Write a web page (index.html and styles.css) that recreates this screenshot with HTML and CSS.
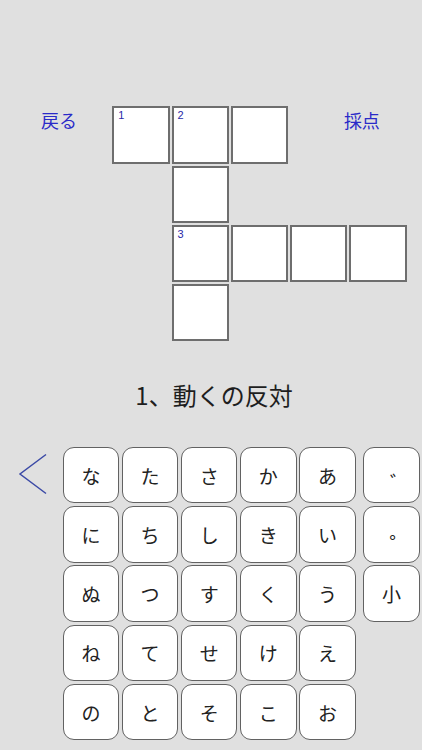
FILE: index.html
```html
<!DOCTYPE html>
<html lang="ja">
<head>
<meta charset="utf-8">
<title>クロスワード</title>
<link rel="stylesheet" href="styles.css">
</head>
<body>
<main class="screen">
  <section class="board">
    <div class="nav nav-back">戻る</div>
    <div class="cell c1 r1"><span class="num">1</span></div>
    <div class="cell c2 r1"><span class="num">2</span></div>
    <div class="cell c3 r1"></div>
    <div class="nav nav-score">採点</div>
    <div class="cell c2 r2"></div>
    <div class="cell c2 r3"><span class="num">3</span></div>
    <div class="cell c3 r3"></div>
    <div class="cell c4 r3"></div>
    <div class="cell c5 r3"></div>
    <div class="cell c2 r4"></div>
  </section>

  <p class="clue">1、動くの反対</p>

  <section class="keyboard">
    <div class="back-col">
      <svg class="back-arrow" width="30" height="42" viewBox="0 0 30 42">
        <polyline points="28,1.5 2,21 28,40.5" fill="none" stroke="#3b4aa6" stroke-width="1.5"/>
      </svg>
    </div>
    <div class="keys">
      <div class="key">な</div><div class="key">た</div><div class="key">さ</div><div class="key">か</div><div class="key">あ</div><div class="key key-side"><span class="mark daku">゛</span></div>
      <div class="key">に</div><div class="key">ち</div><div class="key">し</div><div class="key">き</div><div class="key">い</div><div class="key key-side"><span class="mark handaku">゜</span></div>
      <div class="key">ぬ</div><div class="key">つ</div><div class="key">す</div><div class="key">く</div><div class="key">う</div><div class="key key-side">小</div>
      <div class="key">ね</div><div class="key">て</div><div class="key">せ</div><div class="key">け</div><div class="key">え</div><div class="blank"></div>
      <div class="key">の</div><div class="key">と</div><div class="key">そ</div><div class="key">こ</div><div class="key">お</div><div class="blank"></div>
    </div>
  </section>
</main>
</body>
</html>
```

FILE: styles.css
```css
html, body {
  margin: 0;
  padding: 0;
}
body {
  background: #e0e0e0;
  font-family: "Noto Sans CJK JP", "Noto Sans", sans-serif;
  color: #222;
}
.screen {
  width: 422px;
  height: 750px;
  overflow: hidden;
  padding-top: 106.3px;
  box-sizing: border-box;
}
.board {
  display: grid;
  grid-template-columns: 110.3px repeat(5, 57.3px);
  grid-template-rows: repeat(4, 57.3px);
  gap: 2px;
}
.cell {
  background: #fff;
  border: 2px solid #6e6e6e;
  box-sizing: border-box;
  padding: 2px 4px;
}
.c1 { grid-column: 2; }
.c2 { grid-column: 3; }
.c3 { grid-column: 4; }
.c4 { grid-column: 5; }
.c5 { grid-column: 6; }
.r1 { grid-row: 1; }
.r2 { grid-row: 2; }
.r3 { grid-row: 3; }
.r4 { grid-row: 4; }
.num {
  display: block;
  font-family: "Liberation Sans", Arial, sans-serif;
  font-size: 11px;
  line-height: 11px;
  color: #2a2aa8;
}
.nav {
  grid-row: 1;
  font-size: 18px;
  line-height: 18px;
  color: #2a2ac8;
  margin-top: 5px;
}
.nav-back {
  grid-column: 1;
  padding-left: 41px;
}
.nav-score {
  grid-column: 5 / span 2;
  padding-left: 53.7px;
}
.clue {
  margin: 41.7px 0 0;
  text-align: center;
  font-size: 24px;
  line-height: 24px;
  color: #1e1e1e;
  padding-left: 6px;
}
.keyboard {
  display: flex;
  margin-top: 39.7px;
}
.back-col {
  width: 62.7px;
  flex: none;
}
.back-arrow {
  display: block;
  margin: 6px 0 0 18px;
}
.keys {
  display: grid;
  grid-template-columns: repeat(5, 56.5px) 61.7px;
  grid-auto-rows: 56.6px;
  column-gap: 2.65px;
  row-gap: 2.65px;
}
.key {
  background: #fff;
  border: 1.5px solid #626262;
  border-radius: 11px;
  box-sizing: border-box;
  display: flex;
  align-items: center;
  justify-content: center;
  font-size: 19px;
  color: #222;
}
.key-side {
  margin-left: 4.3px;
}
.mark {
  display: inline-block;
}
.daku {
  transform: translate(8px, 6px);
}
.handaku {
  font-size: 22px;
  transform: translate(9px, 9px);
}
```
